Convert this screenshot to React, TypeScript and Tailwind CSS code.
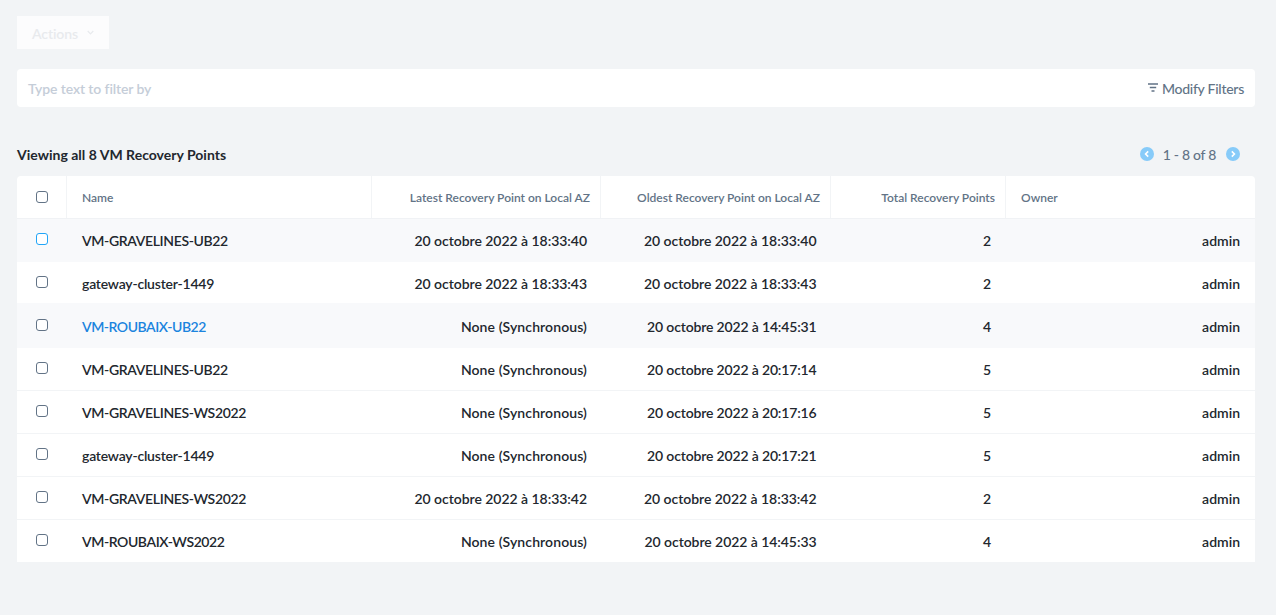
import type { ReactNode } from "react";

type Row = {
  name: string;
  nameClass: string;
  latest: string;
  oldest: string;
  total: number;
  rowClass: string;
  boxClass?: string;
};

const NONE = "None (Synchronous)";
const PLAIN = "h-[43px] border-b border-[#f2f4f6]";
const HIGHLIGHT = "h-[43px] border-b border-[#f8f9fb] bg-[#f8f9fb]";
const BEFORE_HIGHLIGHT = "h-[43px] border-b-2 border-[#f8f9fb]";

const rows: Row[] = [
  { name: "VM-GRAVELINES-UB22", nameClass: "tracking-[-0.35px]", latest: "20 octobre 2022 à 18:33:40", oldest: "20 octobre 2022 à 18:33:40", total: 2, rowClass: HIGHLIGHT, boxClass: "border-[#22a5f7]" },
  { name: "gateway-cluster-1449", nameClass: "tracking-[-0.21px]", latest: "20 octobre 2022 à 18:33:43", oldest: "20 octobre 2022 à 18:33:43", total: 2, rowClass: BEFORE_HIGHLIGHT },
  { name: "VM-ROUBAIX-UB22", nameClass: "tracking-[-0.46px] text-[#1b84de]", latest: NONE, oldest: "20 octobre 2022 à 14:45:31", total: 4, rowClass: HIGHLIGHT },
  { name: "VM-GRAVELINES-UB22", nameClass: "tracking-[-0.35px]", latest: NONE, oldest: "20 octobre 2022 à 20:17:14", total: 5, rowClass: PLAIN },
  { name: "VM-GRAVELINES-WS2022", nameClass: "tracking-[-0.34px]", latest: NONE, oldest: "20 octobre 2022 à 20:17:16", total: 5, rowClass: PLAIN },
  { name: "gateway-cluster-1449", nameClass: "tracking-[-0.21px]", latest: NONE, oldest: "20 octobre 2022 à 20:17:21", total: 5, rowClass: PLAIN },
  { name: "VM-GRAVELINES-WS2022", nameClass: "tracking-[-0.34px]", latest: "20 octobre 2022 à 18:33:42", oldest: "20 octobre 2022 à 18:33:42", total: 2, rowClass: PLAIN },
  { name: "VM-ROUBAIX-WS2022", nameClass: "tracking-[-0.41px]", latest: NONE, oldest: "20 octobre 2022 à 14:45:33", total: 4, rowClass: "h-[42px]" },
];

const GRID = "grid grid-cols-[50px_305px_229px_230px_175px_1fr]";

function Checkbox({ className = "border-[#627386]" }: { className?: string }) {
  return <span className={`block size-3 rounded-[3px] border bg-white ${className}`} />;
}

function HeadCell({ children, className = "" }: { children: ReactNode; className?: string }) {
  return <div className={`flex items-center whitespace-nowrap pt-0.5 ${className}`}>{children}</div>;
}

function dateTracking(value: string) {
  if (value === NONE) return "tracking-[0.1px]";
  if (value.includes("18:33")) return "tracking-[-0.04px]";
  return value.includes("14:45:33") ? "tracking-[-0.06px]" : "tracking-[-0.16px]";
}

function PageButton({ d }: { d: string }) {
  return (
    <svg className="block size-3.5" viewBox="0 0 14 14" fill="none">
      <circle cx="7" cy="7" r="7" fill="#87cbf9" />
      <path d={d} stroke="#fff" strokeWidth="1.6" />
    </svg>
  );
}

export default function App() {
  return (
    <div className="h-[615px] overflow-hidden bg-[#f2f4f6] pt-4 pr-[21px] pl-[17px] font-['Lato',sans-serif] text-sm font-semibold text-[#22272e]">
      <div className="flex h-[33px] w-[92px] items-center bg-[#fcfcfd] pt-0.5 pl-[15px] text-[#e8eaed]">
        <span className="leading-4 tracking-[-0.1px]">Actions</span>
        <svg className="mb-[3px] ml-[9px] h-[5px] w-[7px]" viewBox="0 0 7 5" fill="none">
          <path d="M.7 1 3.5 3.8 6.3 1" stroke="currentColor" strokeWidth="1.2" />
        </svg>
      </div>

      <div className="mt-5 flex h-[38px] items-center rounded bg-white pt-0.5 pr-[11px] pl-[11px]">
        <span className="tracking-[-0.11px] text-[#c5cdd8]">Type text to filter by</span>
        <div className="ml-auto flex items-center text-[#627386]">
          <svg className="mr-1 mb-[3px] h-[9px] w-[10px]" viewBox="0 0 10 9" fill="none" stroke="currentColor" strokeWidth="1.5">
            <path d="M0 1H10M1.8 4.5H8.2M3.5 8H6.5" />
          </svg>
          <span className="font-medium tracking-[-0.26px]">Modify Filters</span>
        </div>
      </div>

      <div className="mt-[37px] flex h-5 items-center">
        <h1 className="pt-px font-bold tracking-[0.01px]">Viewing all 8 VM Recovery Points</h1>
        <div className="ml-auto flex items-center pr-[15px] text-[#627386]">
          <PageButton d="M8.2 4.4 5.6 7 8.2 9.6" />
          <span className="mr-[10px] ml-[9px] pt-px font-medium tracking-[-0.3px]">1 - 8 of 8</span>
          <PageButton d="M5.8 4.4 8.4 7 5.8 9.6" />
        </div>
      </div>

      <div className="mt-3 overflow-hidden rounded-t bg-white">
        <div className={`${GRID} h-[43px] border-b border-[#f0f2f5] text-xs text-[#627386]`}>
          <div className="border-r border-[#f2f4f6] pt-[15px] pl-[19px]">
            <Checkbox />
          </div>
          <HeadCell className="border-r border-[#f2f4f6] pl-[15px]">Name</HeadCell>
          <HeadCell className="justify-end border-r border-[#f2f4f6] pr-[10px]">Latest Recovery Point on Local AZ</HeadCell>
          <HeadCell className="justify-end border-r border-[#f2f4f6] pr-[10px]">Oldest Recovery Point on Local AZ</HeadCell>
          <HeadCell className="justify-end border-r border-[#f2f4f6] pr-[10px]">Total Recovery Points</HeadCell>
          <HeadCell className="pl-[15px]">Owner</HeadCell>
        </div>
        {rows.map((row, i) => (
          <div key={i} className={`${GRID} whitespace-nowrap leading-5 ${row.rowClass}`}>
            <div className="pt-[14px] pl-[19px]">
              <Checkbox className={row.boxClass} />
            </div>
            <div className={`pt-3 pl-[15px] ${row.nameClass}`}>{row.name}</div>
            <div className={`pt-3 pr-[14px] text-right ${dateTracking(row.latest)}`}>{row.latest}</div>
            <div className={`pt-3 pr-[14.5px] text-right ${dateTracking(row.oldest)}`}>{row.oldest}</div>
            <div className="pt-3 pr-[15px] text-right">{row.total}</div>
            <div className="pt-3 pr-[15px] text-right">admin</div>
          </div>
        ))}
      </div>
    </div>
  );
}
